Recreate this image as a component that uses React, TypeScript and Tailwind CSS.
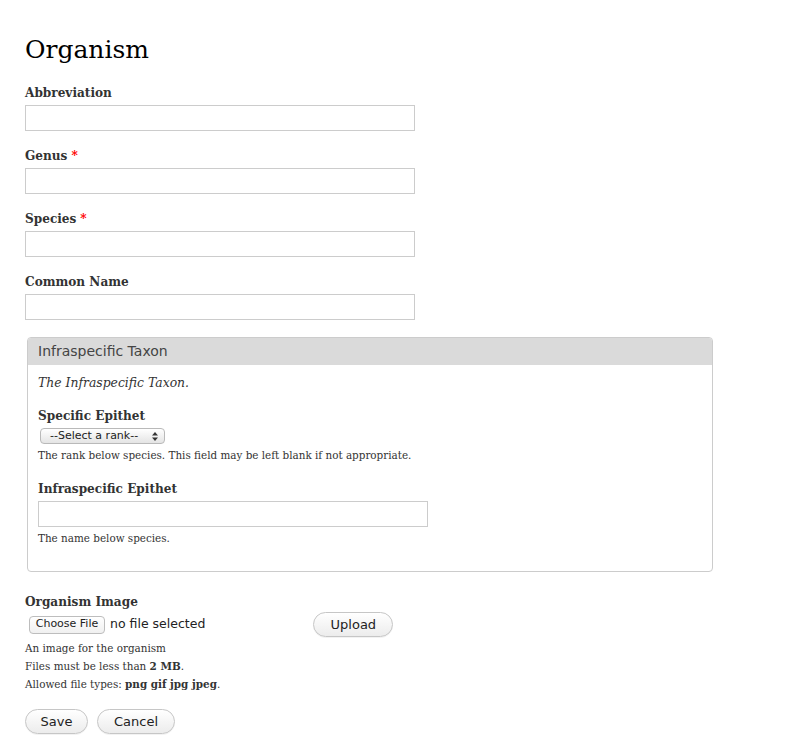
import React from "react";

const serif = "font-['Georgia','DejaVu_Serif',serif]";

function Label({ text, required }: { text: string; required?: boolean }) {
  return (
    <div className="h-[18px] text-[12.1px] leading-[18px] font-bold text-[#333]">
      {text}
      {required && <span className="text-[#ff0000] ml-[4px]">*</span>}
    </div>
  );
}

function TextInput() {
  return <div className="mt-[3px] w-[390px] h-[26px] border border-[#cccccc] bg-white" />;
}

function MacButton({ children, className }: { children: React.ReactNode; className?: string }) {
  return (
    <div
      className={`flex items-center justify-center h-[25px] rounded-full border border-[#c6c6c6] bg-gradient-to-b from-white to-[#ececec] text-[13px] text-[#222] font-['DejaVu_Sans',sans-serif] shadow-[0_1px_0_rgba(0,0,0,0.05)] ${className ?? ""}`}
    >
      {children}
    </div>
  );
}

export default function App() {
  return (
    <div className={`bg-white w-[789px] h-[756px] px-[25px] pt-[34px] text-[#333] ${serif}`}>
      <h1 className="text-[25px] leading-[32px] font-normal text-black">Organism</h1>

      <div className="mt-[18px]">
        <Label text="Abbreviation" />
        <TextInput />
      </div>
      <div className="mt-[16px]">
        <Label text="Genus" required />
        <TextInput />
      </div>
      <div className="mt-[16px]">
        <Label text="Species" required />
        <TextInput />
      </div>
      <div className="mt-[16px]">
        <Label text="Common Name" />
        <TextInput />
      </div>

      <div className="mt-[17px] ml-[2px] w-[686px] h-[235px] border border-[#cccccc] rounded-[4px] overflow-hidden">
        <div className="h-[27px] bg-[#dadada] pl-[10px] flex items-center text-[14px] text-[#444] font-['DejaVu_Sans',sans-serif]">
          Infraspecific Taxon
        </div>
        <div className="px-[10px]">
          <div className="mt-[9px] text-[12.4px] leading-[18px] italic text-[#333]">The Infraspecific Taxon.</div>
          <div className="mt-[15px]">
            <Label text="Specific Epithet" />
          </div>
          <div className="mt-[3px] ml-[2px] w-[125px] h-[16px] rounded-[4px] border border-[#b9b9b9] bg-gradient-to-b from-white to-[#e4e4e4] flex items-center justify-between pl-[9px] pr-[6px] text-[11px] text-[#222] font-['DejaVu_Sans',sans-serif]">
            <span>--Select a rank--</span>
            <svg width="6" height="9" viewBox="0 0 6 9">
              <path d="M3 0 L6 3.5 L0 3.5 Z" fill="#333" />
              <path d="M3 9 L6 5.5 L0 5.5 Z" fill="#333" />
            </svg>
          </div>
          <div className="mt-[4px] text-[10.4px] leading-[15px] text-[#333]">
            The rank below species. This field may be left blank if not appropriate.
          </div>
          <div className="mt-[17px]">
            <Label text="Infraspecific Epithet" />
          </div>
          <TextInput />
          <div className="mt-[4px] text-[10.4px] leading-[15px] text-[#333]">The name below species.</div>
        </div>
      </div>

      <div className="mt-[21px]">
        <Label text="Organism Image" />
      </div>
      <div className="flex items-center h-[25px] mt-[1px]">
        <div className="ml-[4px] h-[18px] w-[76px] rounded-[4px] border border-[#bdbdbd] bg-gradient-to-b from-white to-[#f0f0f0] flex items-center justify-center text-[11px] text-[#222] font-['DejaVu_Sans',sans-serif]">
          Choose File
        </div>
        <span className="ml-[5px] text-[12.5px] text-[#222] font-['DejaVu_Sans',sans-serif]">no file selected</span>
        <MacButton className="ml-[108px] w-[80px]">Upload</MacButton>
      </div>
      <div className="mt-[2px] text-[10.4px] leading-[18px] text-[#333]">
        <div>An image for the organism</div>
        <div>
          Files must be less than <b>2 MB</b>.
        </div>
        <div>
          Allowed file types: <b>png gif jpg jpeg</b>.
        </div>
      </div>
      <div className="mt-[16px] flex gap-[9px]">
        <MacButton className="w-[63px]">Save</MacButton>
        <MacButton className="w-[78px]">Cancel</MacButton>
      </div>
    </div>
  );
}
